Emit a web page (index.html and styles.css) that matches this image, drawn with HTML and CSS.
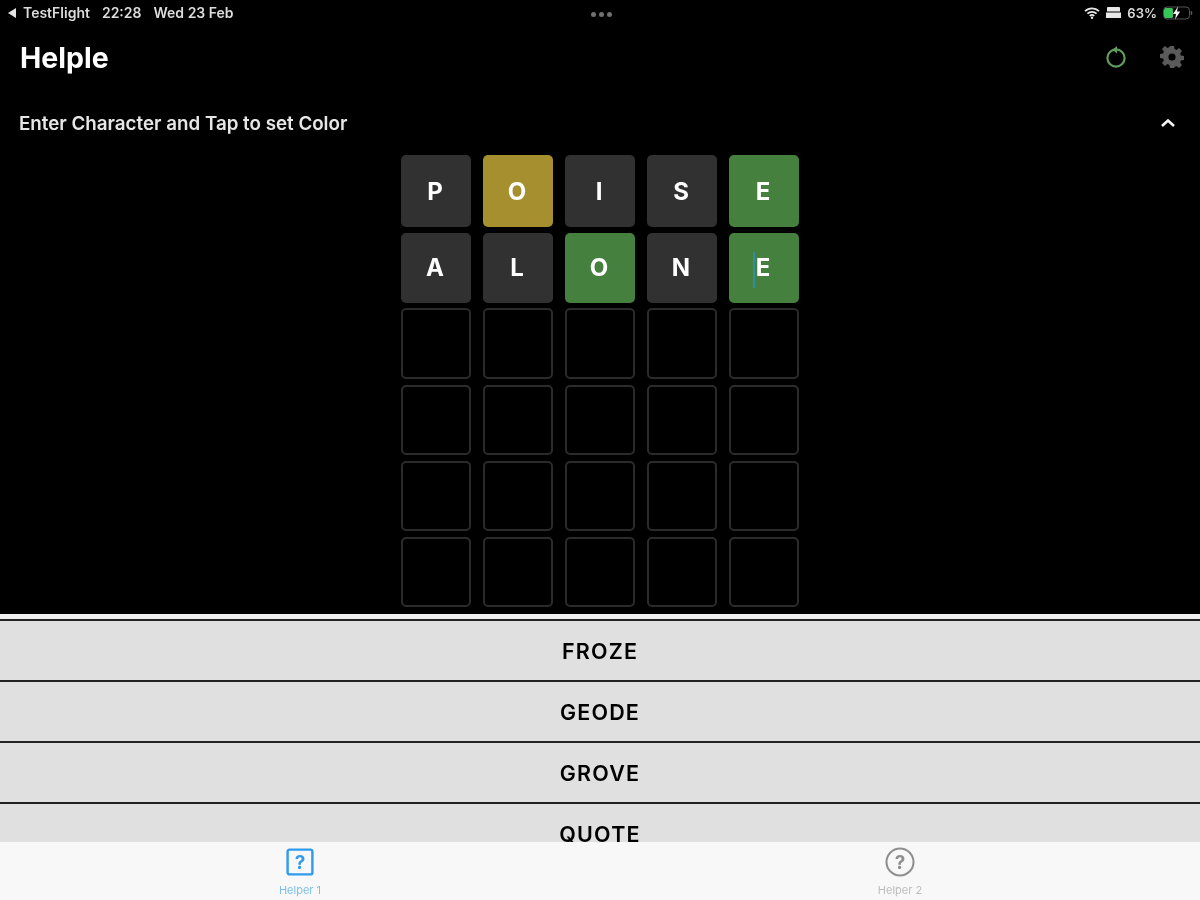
FILE: index.html
```html
<!DOCTYPE html>
<html lang="en">
<head>
<meta charset="utf-8">
<title>Helple</title>
<link rel="stylesheet" href="styles.css">
</head>
<body>
<div class="app">
  <div class="top">
    <div class="status">
      <div class="status-left"><span class="back-tri"></span><span>TestFlight</span><span class="time">22:28</span><span class="date">Wed 23 Feb</span></div>
      <div class="dots"><i></i><i></i><i></i></div>
      <div class="status-right">
        <svg class="wifi" viewBox="0 0 16 12" width="16" height="12"><path d="M1 4.2a10 10 0 0 1 14 0M3.4 6.7a6.6 6.6 0 0 1 9.2 0M5.7 9a3.3 3.3 0 0 1 4.6 0" fill="none" stroke="#e8e8e8" stroke-width="1.7"/><circle cx="8" cy="10.8" r="1.2" fill="#e8e8e8"/></svg>
        <svg class="bed" viewBox="0 0 15 11" width="15" height="11"><path d="M2 0h11a1 1 0 0 1 1 1v3.4H1V1a1 1 0 0 1 1-1zM0 5.4h15V11H0z" fill="#e8e8e8"/></svg>
        <span class="pct">63%</span>
        <svg class="battery" viewBox="0 0 31 14" width="31" height="14"><rect x="1" y="2" width="9" height="10" rx="1.5" fill="#35c759"/><rect x="0.5" y="1" width="26" height="12" rx="3.5" fill="none" stroke="#555" stroke-width="1"/><rect x="27.6" y="5" width="1.6" height="4" rx="0.8" fill="#555"/><path d="M15 0.5 10 8h3l-1 5.5 5.2-8H14z" fill="#f2f2f2"/></svg>
      </div>
    </div>
    <header class="nav">
      <h1 class="title">Helple</h1>
      <div class="nav-icons">
        <svg class="reload" viewBox="0 0 24 24" width="24" height="24"><circle cx="12" cy="13" r="8.6" fill="none" stroke="#5f9d5c" stroke-width="2.2"/><path d="M13 1v7.6L8.4 4.8z" fill="#5f9d5c"/></svg>
        <svg class="gear" viewBox="0 0 24 24" width="24" height="24"><path fill="#5a5a5a" fill-rule="evenodd" d="M10 1h4l.6 3.1 1.9.8L19.1 3l2.9 2.9-1.9 2.6.8 1.9 3.1.6v4l-3.1.6-.8 1.9 1.9 2.6-2.9 2.9-2.6-1.9-1.9.8L14 23h-4l-.6-3.1-1.9-.8L4.9 21 2 18.1l1.9-2.6-.8-1.9L0 13V9l3.1-.6.8-1.9L2 3.9 4.9 1l2.6 1.9 1.9-.8zM12 8.4a3.6 3.6 0 1 0 0 7.2 3.6 3.6 0 0 0 0-7.2z"/></svg>
      </div>
    </header>
    <div class="section">
      <span class="hint">Enter Character and Tap to set Color</span>
      <svg class="chevron" viewBox="0 0 16 10" width="16" height="10"><path d="M2 8l6-5.5L14 8" fill="none" stroke="#f4f4f4" stroke-width="2.6"/></svg>
    </div>
    <div class="grid">
      <div class="tile gray">P</div><div class="tile yellow">O</div><div class="tile gray">I</div><div class="tile gray">S</div><div class="tile green">E</div>
      <div class="tile gray">A</div><div class="tile gray">L</div><div class="tile green">O</div><div class="tile gray">N</div><div class="tile green caret">E</div>
      <div class="tile empty"></div><div class="tile empty"></div><div class="tile empty"></div><div class="tile empty"></div><div class="tile empty"></div>
      <div class="tile empty"></div><div class="tile empty"></div><div class="tile empty"></div><div class="tile empty"></div><div class="tile empty"></div>
      <div class="tile empty"></div><div class="tile empty"></div><div class="tile empty"></div><div class="tile empty"></div><div class="tile empty"></div>
      <div class="tile empty"></div><div class="tile empty"></div><div class="tile empty"></div><div class="tile empty"></div><div class="tile empty"></div>
    </div>
  </div>
  <div class="list">
    <div class="word"><span>FROZE</span></div>
    <div class="word"><span>GEODE</span></div>
    <div class="word"><span>GROVE</span></div>
    <div class="word"><span>QUOTE</span></div>
  </div>
  <nav class="tabs">
    <div class="tab active">
      <svg viewBox="0 0 30 30" width="30" height="30"><rect x="2.6" y="2.6" width="24.8" height="24.8" rx="2" fill="none" stroke="#2f9bea" stroke-width="2.4"/><text x="15" y="22" class="tab-q blue">?</text></svg>
      <span>Helper 1</span>
    </div>
    <div class="tab">
      <svg viewBox="0 0 30 30" width="30" height="30"><circle cx="15" cy="15" r="13.5" fill="none" stroke="#8e8e8e" stroke-width="2"/><text x="15" y="22" class="tab-q grey">?</text></svg>
      <span>Helper 2</span>
    </div>
  </nav>
</div>
</body>
</html>
```
FILE: styles.css
```css
* { box-sizing: border-box; }
html, body { margin: 0; height: 100%; background: #000; }
body { font-family: Inter, "Liberation Sans", Arial, sans-serif; overflow: hidden; }
.app { width: 1200px; height: 900px; display: flex; flex-direction: column; }
.top { background: #000; color: #fff; height: 614px; flex: none; }
.status, .nav, .section, .grid, .tab, .word span { filter: blur(0.7px); }
.status { height: 24px; padding: 1px 6px 0 8px; display: grid; grid-template-columns: 1fr auto 1fr; align-items: center; font-size: 14px; font-weight: 600; color: #dcdcdc; }
.status-left { display: flex; align-items: center; }
.back-tri { width: 0; height: 0; border: 5px solid transparent; border-left: 0; border-right: 8px solid #e4e4e4; margin-right: 7px; }
.time { margin-left: 12px; }
.date { margin-left: 12px; }
.dots { display: flex; gap: 3px; margin-top: 4px; }
.dots i { width: 5px; height: 5px; border-radius: 50%; background: #707070; }
.status-right { display: flex; align-items: center; justify-content: flex-end; gap: 6px; }
.pct { font-size: 13px; }
.nav { height: 68px; padding: 0 16px 2px 20px; display: flex; align-items: center; justify-content: space-between; }
.title { margin: 0; font-size: 28.5px; font-weight: 700; color: #fff; }
.nav-icons { display: flex; align-items: center; gap: 32px; }
.section { height: 62px; padding: 0 24px 0 19px; display: flex; align-items: center; justify-content: space-between; font-size: 18.75px; font-weight: 600; color: #e6e6e6; }
.grid { width: 398px; margin: 0 auto; padding-top: 1px; display: grid; grid-template-columns: repeat(5, 70px); grid-template-rows: 72px 70px 71px 70.5px 70.5px 70px; column-gap: 12px; row-gap: 5.6px; }
.tile { border-radius: 5px; display: flex; align-items: center; justify-content: center; padding-right: 2px; font-size: 24px; font-weight: 700; color: #fff; }
.gray { background: #313132; }
.yellow { background: #a68f2f; }
.green { background: #46803f; }
.empty { border: 2px solid #2b2b2b; }
.caret { position: relative; }
.caret::before { content: ""; position: absolute; left: 24px; top: 19px; width: 2px; height: 36px; background: #2b8f9f; }
.list { flex: 1; min-height: 0; overflow: hidden; background: #e0e0e0; border-top: 5px solid #f0f0f0; }
.word { height: 61px; border-top: 2px solid #222; display: flex; align-items: center; justify-content: center; font-size: 21.5px; font-weight: 600; letter-spacing: 1.2px; color: #000; }
.tabs { height: 58px; flex: none; background: #f8f8f8; display: grid; grid-template-columns: 1fr 1fr; }
.tab { display: flex; flex-direction: column; align-items: center; padding-top: 5px; font-size: 11px; color: #bdbdbd; gap: 6px; }
.tab.active { color: #7cc0ee; }
.tab-q { font-size: 19px; font-weight: 700; text-anchor: middle; }
.tab-q.blue { fill: #2f9bea; }
.tab-q.grey { fill: #8e8e8e; }
```
